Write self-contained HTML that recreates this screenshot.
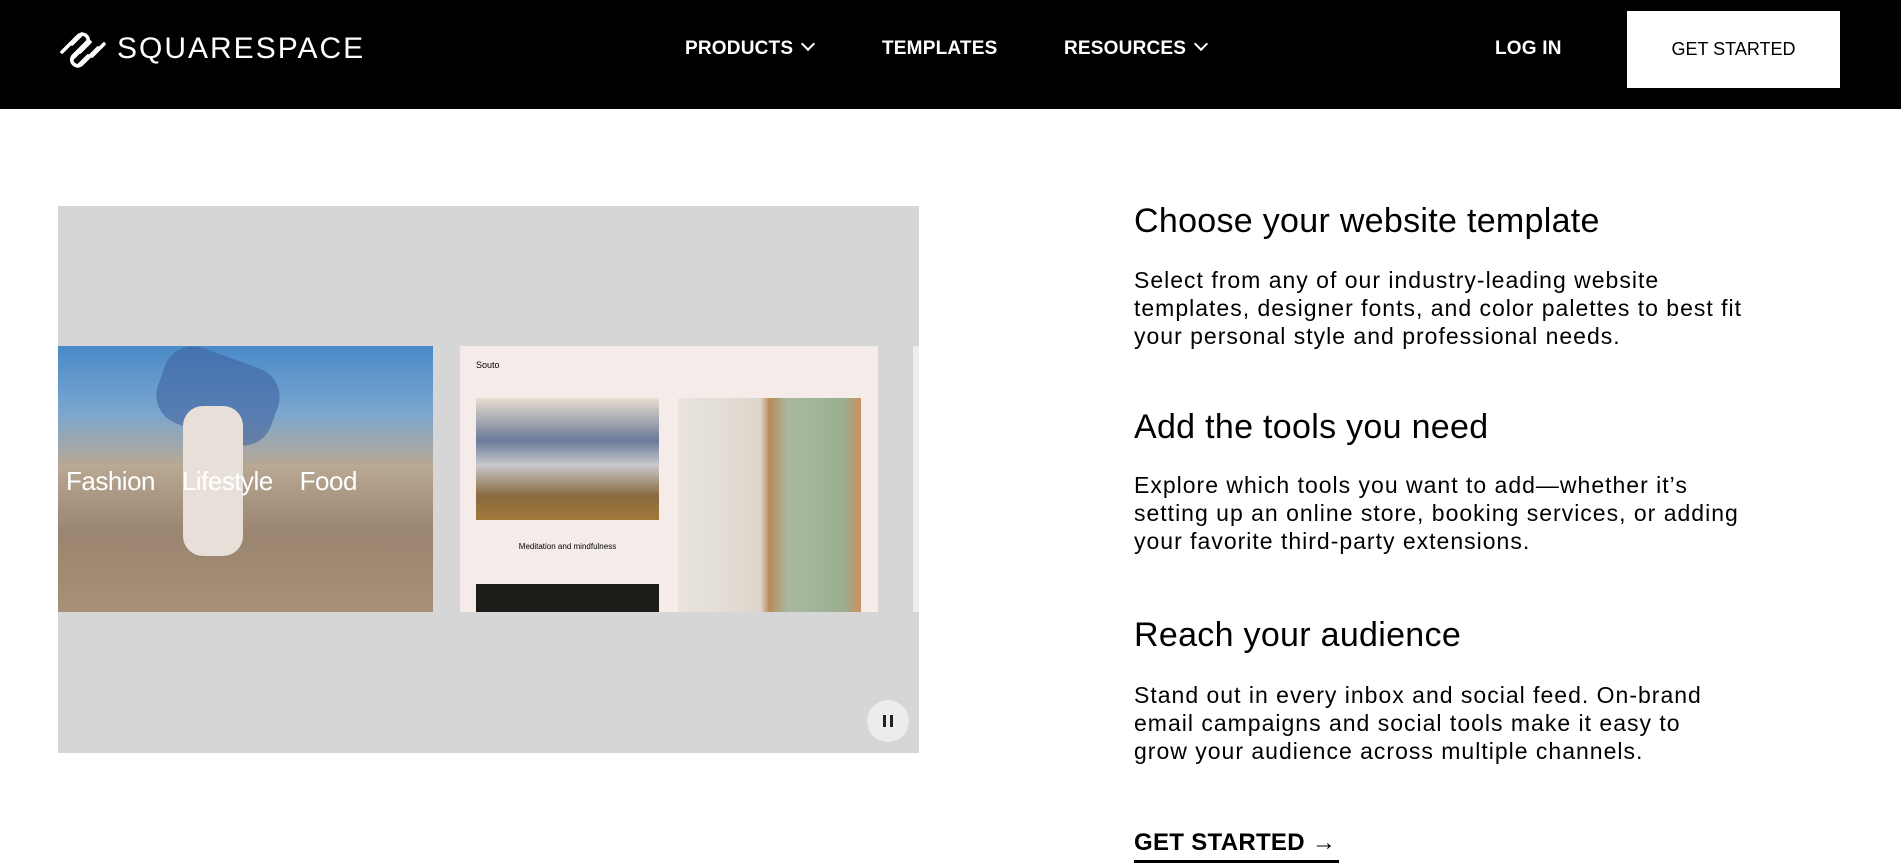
<!DOCTYPE html>
<html><head><meta charset="utf-8"><style>
*{margin:0;padding:0;box-sizing:border-box}
body{width:1901px;height:866px;overflow:hidden;background:#fff;font-family:"Liberation Sans",sans-serif;color:#000;position:relative}
.nav{position:absolute;left:0;top:0;width:1901px;height:109px;background:#000;color:#fff}
.nav .l{position:absolute;font-size:19px;font-weight:bold;top:38px;letter-spacing:0.2px}
.btn{position:absolute;left:1627px;top:11px;width:213px;height:77px;background:#fff;color:#000;font-size:18px;text-align:center;line-height:77px}
.gray{position:absolute;left:58px;top:206px;width:861px;height:547px;background:#d6d6d6;overflow:hidden}
h2{position:absolute;left:1134px;font-size:34px;font-weight:normal;letter-spacing:0.3px}
p{position:absolute;left:1134px;font-size:23px;line-height:28px;width:760px;letter-spacing:1px}
</style></head><body>
<div class="nav">
<svg style="position:absolute;left:58px;top:26px" width="52" height="48" viewBox="0 0 52 48" fill="none" stroke="#fff" stroke-width="3.5" stroke-linecap="round">
<path d="M4 26 L20 10 a6 6 0 0 1 8.5 8.5 L14 33"/>
<path d="M14 18 L24 8"/>
<path d="M22 26 L32 16"/>
<path d="M40 22 L24 38 a6 6 0 0 1 -8.5 -8.5 L30 15"/>
<path d="M30 30 L20 40"/>
<path d="M34 30 L46 18"/>
</svg>
<div style="position:absolute;left:117px;top:32px;font-size:30px;letter-spacing:2px">SQUARESPACE</div>
<div class="l" style="left:685px">PRODUCTS <span style="display:inline-block;width:10px;height:10px;border-right:2.5px solid #fff;border-bottom:2.5px solid #fff;transform:rotate(45deg);margin-left:4px;position:relative;top:-5px"></span></div>
<div class="l" style="left:882px">TEMPLATES</div>
<div class="l" style="left:1064px">RESOURCES <span style="display:inline-block;width:10px;height:10px;border-right:2.5px solid #fff;border-bottom:2.5px solid #fff;transform:rotate(45deg);margin-left:4px;position:relative;top:-5px"></span></div>
<div class="l" style="left:1495px">LOG IN</div>
<div class="btn">GET STARTED</div>
</div>
<div class="gray">
<div style="position:absolute;left:0;top:140px;width:375px;height:266px;background:linear-gradient(180deg,#4a8ac8 0%,#7aa6cf 25%,#b8a894 45%,#9a8570 70%,#a89078 100%)">
<div style="position:absolute;left:100px;top:10px;width:120px;height:80px;background:#3f62a0;opacity:.6;border-radius:30px;transform:rotate(20deg)"></div>
<div style="position:absolute;left:125px;top:60px;width:60px;height:150px;background:#e8e0d8;border-radius:20px"></div>
<div style="position:absolute;left:8px;top:120px;color:#fff;font-size:26px;letter-spacing:-0.5px">Fashion&nbsp;&nbsp;&nbsp; Lifestyle&nbsp;&nbsp;&nbsp; Food</div>
</div>
<div style="position:absolute;left:402px;top:140px;width:418px;height:266px;background:#f5ecea">
<div style="position:absolute;left:16px;top:14px;font-size:9px">Souto</div>
<div style="position:absolute;left:16px;top:52px;width:183px;height:122px;background:linear-gradient(180deg,#e8ddd0 0%,#6a7a98 35%,#c8c8cc 55%,#8a6a40 80%,#a07838 100%)"></div>
<div style="position:absolute;left:16px;top:196px;width:183px;text-align:center;font-size:8px">Meditation and mindfulness</div>
<div style="position:absolute;left:16px;top:238px;width:183px;height:28px;background:#1c1c18"></div>
<div style="position:absolute;left:218px;top:52px;width:183px;height:214px;background:linear-gradient(90deg,#e8e4de 0%,#ddd6cc 45%,#b88a58 50%,#a8b8a0 60%,#9ab090 90%,#c89060 100%)"></div>
</div>
<div style="position:absolute;left:855px;top:140px;width:6px;height:266px;background:#eee"></div>
<div style="position:absolute;left:809px;top:494px;width:42px;height:42px;border-radius:50%;background:#ececec"><div style="position:absolute;left:16px;top:15px;width:3px;height:12px;background:#222"></div><div style="position:absolute;left:23px;top:15px;width:3px;height:12px;background:#222"></div></div>
</div>
<h2 style="top:202px">Choose your website template</h2>
<p style="top:266px">Select from any of our industry-leading website<br>templates, designer fonts, and color palettes to best fit<br>your personal style and professional needs.</p>
<h2 style="top:408px">Add the tools you need</h2>
<p style="top:471px">Explore which tools you want to add—whether it’s<br>setting up an online store, booking services, or adding<br>your favorite third-party extensions.</p>
<h2 style="top:616px">Reach your audience</h2>
<p style="top:681px">Stand out in every inbox and social feed. On-brand<br>email campaigns and social tools make it easy to<br>grow your audience across multiple channels.</p>
<div style="position:absolute;left:1134px;top:829px;font-size:24px;font-weight:bold;width:205px;border-bottom:3px solid #000;padding-bottom:3px;letter-spacing:0.3px;white-space:nowrap">GET STARTED <span style="font-weight:bold">→</span></div>
</body></html>
